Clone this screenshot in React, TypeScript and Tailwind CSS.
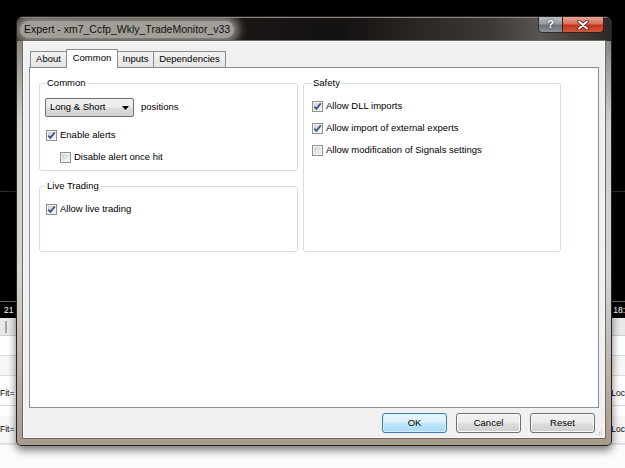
import React from "react";

const ui = "font-['Liberation_Sans',Arial,sans-serif]";

const CheckBox = ({ checked }: { checked: boolean }) => (
  <svg width="11" height="11" viewBox="0 0 11 11" className="shrink-0">
    <defs>
      <linearGradient id="cbg" x1="0" y1="0" x2="1" y2="1">
        <stop offset="0" stopColor="#cfd0d1" />
        <stop offset="1" stopColor="#f6f6f6" />
      </linearGradient>
    </defs>
    <rect x="0.5" y="0.5" width="10" height="10" fill="#f4f4f4" stroke="#8e8f8f" />
    <rect x="2" y="2" width="7" height="7" fill="url(#cbg)" />
    {checked && (
      <path d="M2.3 5.6 L4.4 7.9 L8.8 2.4" fill="none" stroke="#3f5388" strokeWidth="1.7" />
    )}
  </svg>
);

const Option = ({ checked, label, className = "" }: { checked: boolean; label: string; className?: string }) => (
  <div className={"flex items-center h-[14px] gap-[3px] " + className}>
    <CheckBox checked={checked} />
    <span className="text-[9.5px] leading-[14px] text-black whitespace-nowrap">{label}</span>
  </div>
);

const Tab = ({ label, active, w }: { label: string; active?: boolean; w: string }) => (
  <div
    className={
      active
        ? `${w} h-[19px] -mb-px -ml-px relative z-10 bg-white border border-b-0 border-[#898c95] flex items-center justify-center text-[9.5px] pb-[2px]`
        : `${w} h-[16px] -ml-px border border-b-0 border-[#898c95] bg-[linear-gradient(180deg,#f3f3f3,#e3e3e3)] flex items-center justify-center text-[9.5px]`
    }
  >
    {label}
  </div>
);

const Btn = ({ label, primary }: { label: string; primary?: boolean }) => (
  <button
    className={
      primary
        ? "w-[65px] h-[20px] rounded-[3px] border border-[#3c7fb1] bg-[linear-gradient(180deg,#eaf6fd_0%,#d9f0fc_45%,#bee6fd_55%,#a7d9f5_100%)] shadow-[inset_0_0_0_1px_#d5eefb] text-[9.5px] text-black"
        : "w-[65px] h-[20px] rounded-[3px] border border-[#707070] bg-[linear-gradient(180deg,#f2f2f2_0%,#ebebeb_45%,#dddddd_55%,#cfcfcf_100%)] shadow-[inset_0_0_0_1px_#fbfbfb] text-[9.5px] text-black"
    }
  >
    {label}
  </button>
);

export default function App() {
  return (
    <div className={`relative w-[625px] h-[468px] overflow-hidden bg-black ${ui}`}>
      {/* terminal behind the dialog */}
      <div className="flex flex-col h-full">
        <div className="h-[192px] border-b border-[#2e2e2e]" />
        <div className="h-[109px]" />
        <div className="h-[17px] border-t border-[#6a6a6a] flex items-center justify-between text-[8.5px] text-white pl-[4px]">
          <span>21</span>
          <span>18:</span>
        </div>
        <div className="h-[18px] bg-[#e9e9e9] border-b border-[#cfcfcf] flex items-center pl-[5px]">
          <div className="w-[2px] h-[12px] bg-[#a5a5a5]" />
        </div>
        <div className="h-[20px] bg-white border-b border-[#dcdcdc]" />
        <div className="h-[20px] bg-[#f7f7f7] border-b border-[#dcdcdc]" />
        <div className="h-[30px] bg-white border-b border-[#dcdcdc] flex items-end justify-between text-[8.5px] pb-[5px]">
          <span>Fit=</span>
          <span>Loc</span>
        </div>
        <div className="h-[10px] bg-white" />
        <div className="h-[28px] bg-[#f7f7f7] border-b border-[#dcdcdc] flex items-center justify-between text-[8.5px]">
          <span>Fit=</span>
          <span>Loc</span>
        </div>
        <div className="flex-1 bg-[#fbfbfb] border-t border-[#e4e4e4]" />
      </div>

      {/* Expert dialog */}
      <div className="absolute left-[16px] top-[16px] w-[596px] h-[430px] flex flex-col rounded-t-[7px] rounded-b-[5px] border border-[#262320] overflow-hidden shadow-[0_4px_9px_rgba(0,0,0,0.55)] bg-[linear-gradient(180deg,#77716b_0%,#d2d0cd_25%,#d6d4d1_60%,#a89a8d_100%)]">
        <div className="h-[24px] shrink-0 flex items-start bg-[linear-gradient(90deg,#26231f_0%,#141210_55%,#3f3a36_80%,#5a5550_88%,#2b2825_100%)] shadow-[inset_0_1px_0_#8a8580]">
          <div className="ml-[3px] mt-[4px] h-[17px] px-[4px] flex items-center rounded-[9px] bg-[#a39e98] shadow-[0_0_9px_5px_#8f8a85]">
            <span className="text-[10.5px] text-[#111] whitespace-nowrap">Expert - xm7_Ccfp_Wkly_TradeMonitor_v33</span>
          </div>
          <div className="ml-auto mr-[7px] -mt-px flex">
            <div className="w-[25px] h-[17px] rounded-bl-[4px] border border-[#2e2e30] bg-[linear-gradient(180deg,#b9bdc2_0%,#959aa0_45%,#6d737a_55%,#8b9197_100%)] flex items-center justify-center text-white font-bold text-[11px] [text-shadow:0_0_2px_#222]">
              ?
            </div>
            <div className="w-[42px] h-[17px] -ml-px rounded-br-[4px] border border-[#3a1d17] bg-[linear-gradient(180deg,#e5a597_0%,#d8705c_45%,#c0341b_55%,#d25a3e_100%)] flex items-center justify-center">
              <svg width="12" height="10" viewBox="0 0 12 10">
                <path d="M2 1.5 L10 8.5 M10 1.5 L2 8.5" stroke="#4a1a10" strokeWidth="3.6" strokeLinecap="round" />
                <path d="M2 1.5 L10 8.5 M10 1.5 L2 8.5" stroke="#ffffff" strokeWidth="2" strokeLinecap="round" />
              </svg>
            </div>
          </div>
        </div>

        <div className="flex-1 px-[6px] pb-[7px]">
          <div className="relative h-full bg-[#f0f0f0] border border-[#f7f7f7] shadow-[0_0_0_1px_#6f6861] flex flex-col px-[5px] pt-[7px]">
            <div className="h-[18px] flex items-end pl-[2px] text-black">
              <Tab label="About" w="w-[37px]" />
              <Tab label="Common" w="w-[52px]" active />
              <Tab label="Inputs" w="w-[37px]" />
              <Tab label="Dependencies" w="w-[73px]" />
            </div>
            <div className="h-[341px] bg-white border border-[#898c95] pt-[9px] pl-[9px] flex gap-[5px] text-black">
              <div className="w-[259px] flex flex-col gap-[9px]">
                <fieldset className="h-[94px] border border-[#d5dfe5] rounded-[3px] px-[6px] pt-[9px]">
                  <legend className="px-[1px] text-[9.5px] leading-[12px]">Common</legend>
                  <div className="flex items-center">
                    <div className="-ml-px w-[89px] h-[19px] rounded-[2px] border border-[#707070] bg-[linear-gradient(180deg,#f2f2f2_0%,#ebebeb_45%,#dddddd_55%,#cfcfcf_100%)] flex items-center pl-[4px] pr-[4px]">
                      <span className="text-[9.5px] flex-1">Long &amp; Short</span>
                      <svg width="7" height="4" viewBox="0 0 7 4">
                        <path d="M0 0 H7 L3.5 4 Z" fill="#000" />
                      </svg>
                    </div>
                    <span className="ml-[7px] text-[9.5px]">positions</span>
                  </div>
                  <Option checked label="Enable alerts" className="mt-[11px]" />
                  <Option checked={false} label="Disable alert once hit" className="mt-[8px] ml-[14px]" />
                </fieldset>
                <fieldset className="h-[72px] border border-[#d5dfe5] rounded-[3px] px-[6px] pt-[10px]">
                  <legend className="px-[1px] text-[9.5px] leading-[12px]">Live Trading</legend>
                  <Option checked label="Allow live trading" />
                </fieldset>
              </div>
              <fieldset className="w-[258px] h-[175px] border border-[#d5dfe5] rounded-[3px] px-[8px] pt-[10px]">
                <legend className="px-[1px] text-[9.5px] leading-[12px]">Safety</legend>
                <Option checked label="Allow DLL imports" />
                <Option checked label="Allow import of external experts" className="mt-[8px]" />
                <Option checked={false} label="Allow modification of Signals settings" className="mt-[8px]" />
              </fieldset>
            </div>
            <div className="mt-[5px] flex justify-end gap-[9px] pr-[4px]">
              <Btn label="OK" primary />
              <Btn label="Cancel" />
              <Btn label="Reset" />
            </div>
            <svg className="absolute right-[1px] bottom-[1px]" width="7" height="7" viewBox="0 0 7 7">
              <rect x="5" y="1" width="1" height="1" fill="#b8b8b8" />
              <rect x="3" y="3" width="1" height="1" fill="#b8b8b8" />
              <rect x="5" y="3" width="1" height="1" fill="#b8b8b8" />
              <rect x="1" y="5" width="1" height="1" fill="#b8b8b8" />
              <rect x="3" y="5" width="1" height="1" fill="#b8b8b8" />
              <rect x="5" y="5" width="1" height="1" fill="#b8b8b8" />
            </svg>
          </div>
        </div>
      </div>
    </div>
  );
}
